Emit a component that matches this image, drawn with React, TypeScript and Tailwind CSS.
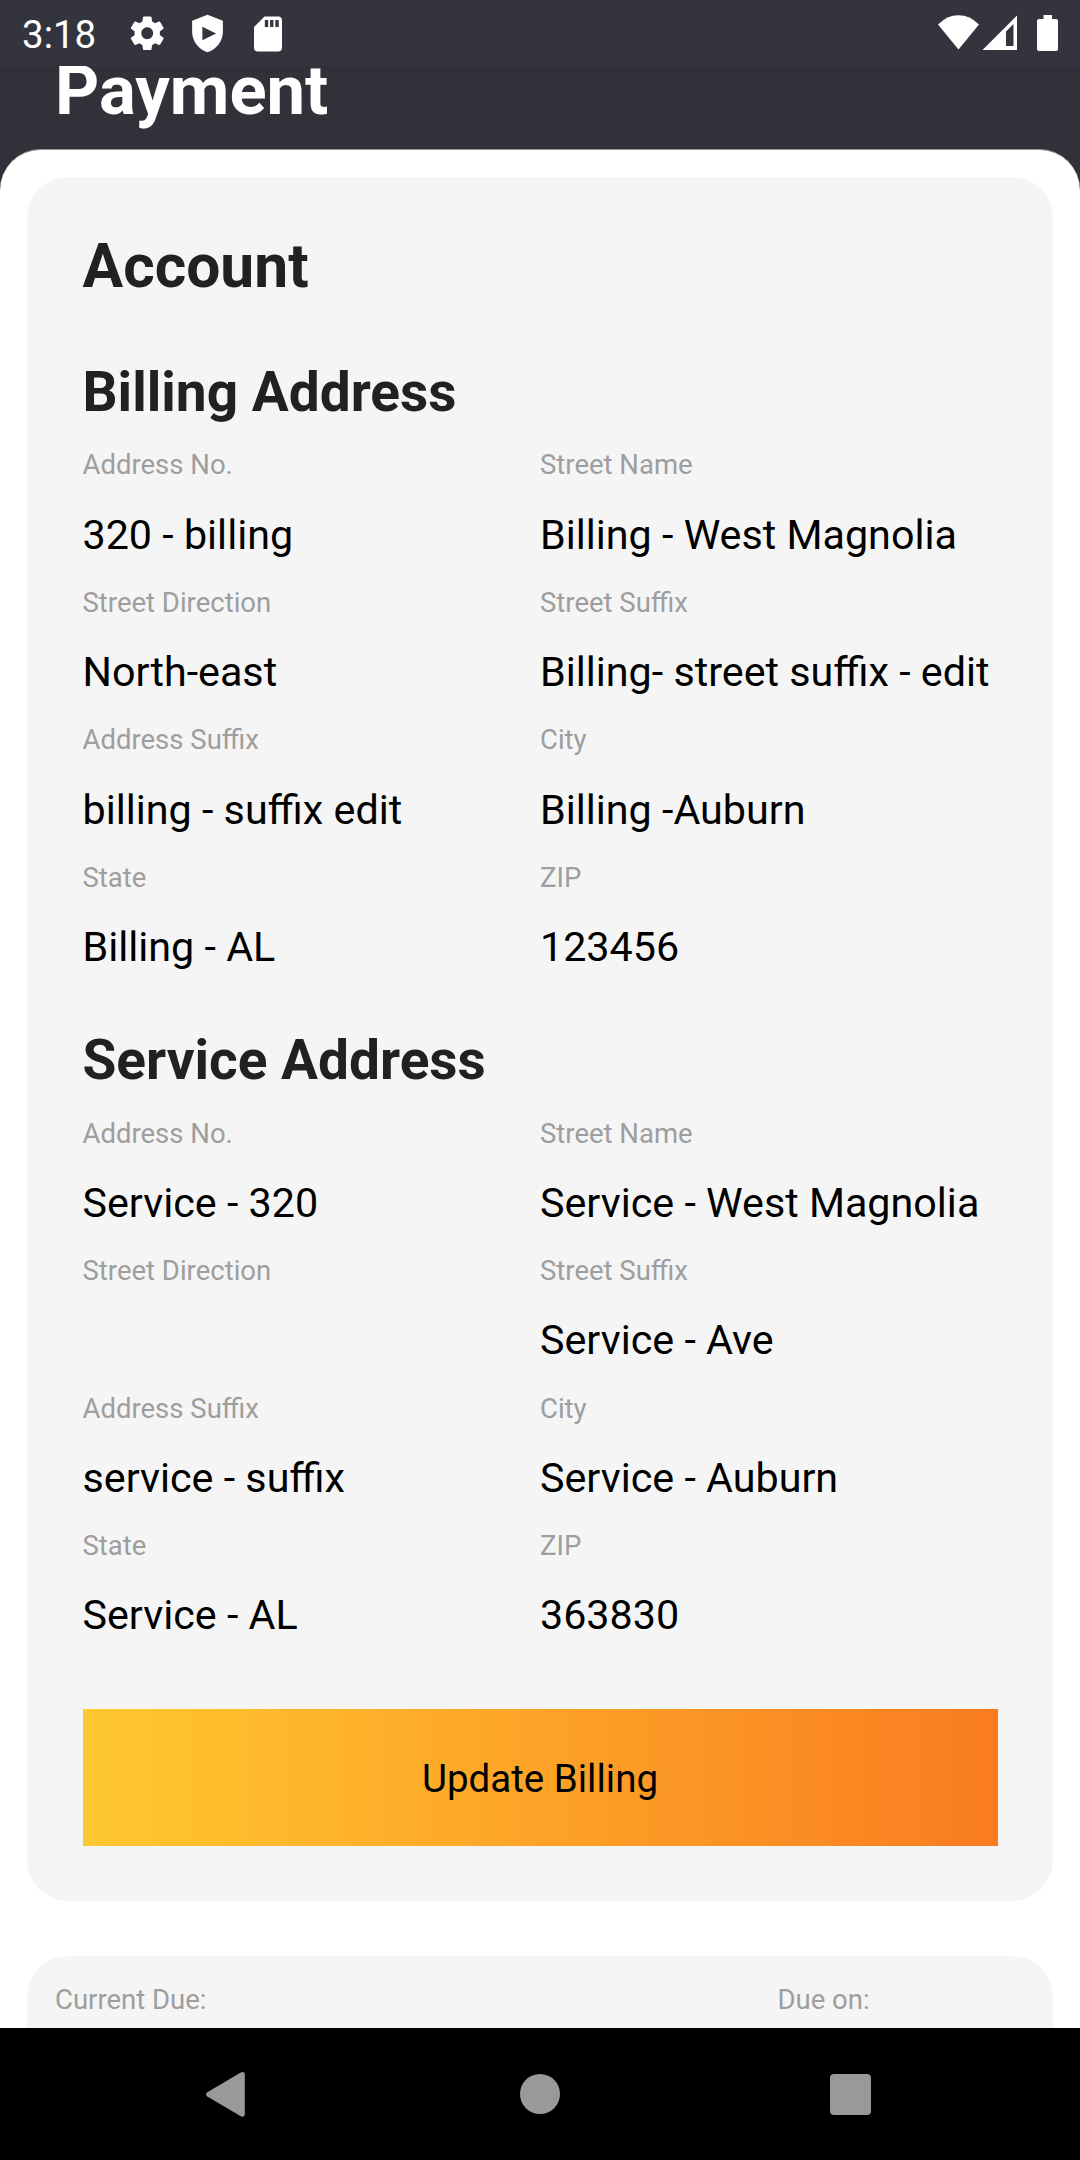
type Field = { label: string; value: string };

const billing: Field[] = [
  { label: "Address No.", value: "320 - billing" },
  { label: "Street Name", value: "Billing - West Magnolia" },
  { label: "Street Direction", value: "North-east" },
  { label: "Street Suffix", value: "Billing- street suffix - edit" },
  { label: "Address Suffix", value: "billing - suffix edit" },
  { label: "City", value: "Billing -Auburn" },
  { label: "State", value: "Billing - AL" },
  { label: "ZIP", value: "123456" },
];

const service: Field[] = [
  { label: "Address No.", value: "Service - 320" },
  { label: "Street Name", value: "Service - West Magnolia" },
  { label: "Street Direction", value: "" },
  { label: "Street Suffix", value: "Service - Ave" },
  { label: "Address Suffix", value: "service - suffix" },
  { label: "City", value: "Service - Auburn" },
  { label: "State", value: "Service - AL" },
  { label: "ZIP", value: "363830" },
];

function StatusBar() {
  return (
    <div className="flex h-[66px] shrink-0 items-center justify-between bg-[#34343e] pl-[22px] pr-[13px] text-white">
      <div className="flex items-center">
        <span className="mt-[3px] w-[104.5px] text-[38.5px] leading-[46px]">3:18</span>
        <svg className="mt-[1px] size-[40.5px]" viewBox="0 0 24 24" fill="currentColor">
          <path d="M19.43 12.98c.04-.32.07-.64.07-.98s-.03-.66-.07-.98l2.11-1.65c.19-.15.24-.42.12-.64l-2-3.46c-.12-.22-.39-.3-.61-.22l-2.49 1c-.52-.4-1.08-.73-1.69-.98l-.38-2.65C14.46 2.18 14.25 2 14 2h-4c-.25 0-.46.18-.49.42l-.38 2.65c-.61.25-1.17.59-1.69.98l-2.49-1c-.23-.09-.49 0-.61.22l-2 3.46c-.13.22-.07.49.12.64l2.11 1.65c-.04.32-.07.65-.07.98s.03.66.07.98l-2.11 1.65c-.19.15-.24.42-.12.64l2 3.46c.12.22.39.3.61.22l2.49-1c.52.4 1.08.73 1.69.98l.38 2.65c.03.24.24.42.49.42h4c.25 0 .46-.18.49-.42l.38-2.65c.61-.25 1.17-.59 1.69-.98l2.49 1c.23.09.49 0 .61-.22l2-3.46c.12-.22.07-.49-.12-.64l-2.11-1.65zM12 15.5c-1.93 0-3.5-1.57-3.5-3.5s1.57-3.5 3.5-3.5 3.5 1.57 3.5 3.5-1.57 3.5-3.5 3.5z" />
        </svg>
        <svg className="ml-5 mt-[1px] size-[41px]" viewBox="0 0 24 24" fill="currentColor" fillRule="evenodd">
          <path d="M12 1 3 4.6V11c0 5.55 3.84 10.4 9 12 5.16-1.6 9-6.45 9-12V4.600zM9 8v8l8-4z" />
        </svg>
        <svg className="ml-[19px] mt-[1px] size-[42px]" viewBox="0 0 24 24" fill="currentColor" fillRule="evenodd">
          <path d="M18 2h-8L4 8v12c0 1.100.9 2 2 2h12c1.100 0 2-.9 2-2V4c0-1.100-.9-2-2-2zM10.200 4h1.900v4h-1.900zM13.200 4h1.900v4h-1.900zM16.200 4h1.900v4h-1.900z" />
        </svg>
      </div>
      <svg className="h-[66px] w-[132px]" viewBox="935 0 132 66" fill="currentColor">
        <path d="M938 24.500Q947 15.200 958.500 15.200T979 24.500L958.500 49.500z" />
        <path fillRule="evenodd" d="M1017 15.500V50H982.500zM1006 31.500V46h7.500V24z" />
        <path d="M1043.500 15h8.500v4h4q2 0 2 2v28q0 2-2 2h-17q-2 0-2-2V21q0-2 2-2h4.500z" />
      </svg>
    </div>
  );
}

function Address({ title, fields }: { title: string; fields: Field[] }) {
  return (
    <section>
      <h3 className="mb-[16.9px] text-[55px] font-bold leading-[64px] text-[#212121]">{title}</h3>
      <div className="grid grid-cols-2">
        {fields.map((f) => (
          <div key={f.label} className="h-[137.5px] whitespace-nowrap pt-[8.5px]">
            <p className="text-[27.5px] leading-[32px] text-[#9e9e9e]">{f.label}</p>
            <p className="mt-[29.2px] text-[41.25px] leading-[48px] text-black">{f.value}</p>
          </div>
        ))}
      </div>
    </section>
  );
}

function NavBar() {
  return (
    <nav className="flex h-[132px] shrink-0 items-center bg-black text-[#999999]">
      <svg className="ml-[204px] h-[46px] w-[42px]" viewBox="204 2071 42 46" fill="currentColor">
        <path d="M207.300 2092.300 240.800 2072.600Q244.800 2070.800 244.800 2075V2114Q244.800 2118 240.800 2116.200L207.300 2096.500Q204.800 2094.400 207.300 2092.300z" />
      </svg>
      <div className="ml-[274px] size-10 rounded-full bg-[#999999]" />
      <div className="ml-[270px] size-[41px] rounded-[4px] bg-[#999999]" />
    </nav>
  );
}

export default function App() {
  return (
    <div className="flex h-[2160px] w-[1080px] flex-col overflow-hidden bg-[#31313a] font-[Roboto,sans-serif]">
      <StatusBar />
      <main className="flex min-h-0 flex-1 flex-col overflow-hidden">
        <h1 className="mb-[34px] shrink-0 pl-[55px] text-[68.75px] font-bold leading-[49px] text-white">
          Payment
        </h1>
        <div className="shrink-0 rounded-t-[41px] border-t border-[#98979d] bg-white px-[27px] pt-[27px]">
          <div className="rounded-[41px] bg-[#f5f5f5] px-[55.5px] pb-[55px] pt-[55px]">
            <h2 className="mb-[58px] text-[60.5px] font-bold leading-[70px] text-[#212121]">Account</h2>
            <div className="flex flex-col gap-[37.45px]">
              <Address title="Billing Address" fields={billing} />
              <Address title="Service Address" fields={service} />
            </div>
            <button className="mt-[50px] flex h-[137px] w-full items-center justify-center bg-linear-to-r from-[#fec82f] to-[#f97b20] pt-[2px] text-[38.5px] text-black">
              Update Billing
            </button>
          </div>
          <div className="mt-[55px] grid h-48 grid-cols-[722.500px_1fr] rounded-t-[41px] bg-[#f5f5f5] px-7 pt-[27.5px] text-[27.5px] leading-[32px] text-[#9e9e9e]">
            <span>Current Due:</span>
            <span>Due on:</span>
          </div>
        </div>
      </main>
      <NavBar />
    </div>
  );
}
